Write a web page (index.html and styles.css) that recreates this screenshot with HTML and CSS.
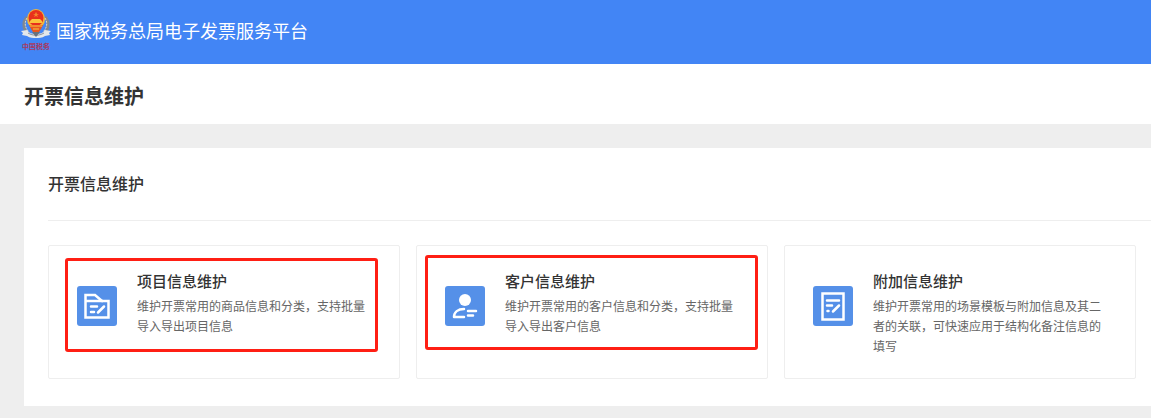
FILE: index.html
```html
<!DOCTYPE html>
<html lang="zh-CN">
<head>
    <meta charset="UTF-8">
    <meta name="viewport" content="width=device-width, initial-scale=1.0">
    <title>开票信息维护</title>
    <link rel="stylesheet" href="styles.css">
</head>
<body>

    <!-- 顶部栏 -->
    <header class="top-bar">
        <svg class="logo" viewBox="0 0 32 44" aria-hidden="true">
            <path d="M7 9C2 14 3 22 10 28M25 9c5 5 4 13-3 19" fill="none" stroke="#7f8791" stroke-width="3"/>
            <path d="M7 10c-3 5-2 10 2 14M25 10c3 5 2 10-2 14" fill="none" stroke="#e0dac6" stroke-width="1" stroke-dasharray="2 1"/>
            <ellipse cx="16" cy="11" rx="9" ry="10" fill="#f2b63c"/>
            <ellipse cx="16" cy="10" rx="7.500" ry="8" fill="#e8301c"/>
            <path d="M16 4l1 2h2l-2 1 1 2-2-1-2 1 1-2-2-1h2z" fill="#f5862c"/>
            <path d="M10 13l2-2h8l2 2v2H10z" fill="#fbc33b"/>
            <path d="M9 17h14l-2 4-2 3h-6l-2-3z" fill="#e9571e"/>
            <path d="M10 18h12M13 21h6" stroke="#f9c440" stroke-width="1"/>
            <path d="M1 23l6-1c2 3 5 4 9 4s7-1 9-4l6 1-2 2 1 2-5 1c-3 2-6 2-9 2s-6 0-9-2l-5-1 1-2z" fill="#e3e7eb"/>
            <path d="M8 25c5 3 11 3 16 0" fill="none" stroke="#8b94a0" stroke-width="1"/>
            <path d="M12 24h8l-4 5z" fill="#68717d"/>
            <text class="logo-text" x="2" y="41">中国税务</text>
        </svg>
        <span class="platform-name">国家税务总局电子发票服务平台</span>
    </header>

    <!-- 页面标题 -->
    <div class="page-title">
        <h1>开票信息维护</h1>
    </div>

    <main class="panel">
        <h2 class="panel-title">开票信息维护</h2>

        <div class="card-list">
            <!-- 项目信息 -->
            <a class="card" href="#project">
                <svg class="card-icon" viewBox="0 0 40 40" aria-hidden="true">
                    <rect width="40" height="40" rx="3" fill="#5590e8"/>
                    <path d="M8.500 31.500V9H18l7 6h6.500v16.500z" fill="none" stroke="#fff" stroke-width="2.500"/>
                    <path d="M8 15h18" stroke="#fff" stroke-width="2.500"/>
                    <path d="M14 20.500h6M14 26h3M21 26.500l6-6" fill="none" stroke="#fff" stroke-width="2.500" stroke-linecap="round"/>
                </svg>
                <div class="card-text">
                    <h3>项目信息维护</h3>
                    <p>维护开票常用的商品信息和分类，支持批量导入导出项目信息</p>
                </div>
                <span class="mark mark-project"></span>
            </a>

            <!-- 客户信息 -->
            <a class="card" href="#customer">
                <svg class="card-icon" viewBox="0 0 40 40" aria-hidden="true">
                    <rect width="40" height="40" rx="3" fill="#5590e8"/>
                    <circle cx="20" cy="14" r="6" fill="#fff"/>
                    <path d="M19 23c-6 0-10 3-10 8h10" fill="none" stroke="#fff" stroke-width="2.500" stroke-linecap="round" stroke-linejoin="round"/>
                    <path d="M23 25h8M23 29.500h5" stroke="#fff" stroke-width="2.500" stroke-linecap="round"/>
                </svg>
                <div class="card-text">
                    <h3>客户信息维护</h3>
                    <p>维护开票常用的客户信息和分类，支持批量导入导出客户信息</p>
                </div>
                <span class="mark mark-customer"></span>
            </a>

            <!-- 附加信息 -->
            <a class="card" href="#extra">
                <svg class="card-icon" viewBox="0 0 40 40" aria-hidden="true">
                    <rect width="40" height="40" rx="3" fill="#5590e8"/>
                    <rect x="9.500" y="7.500" width="21" height="26" fill="none" stroke="#fff" stroke-width="2.500"/>
                    <path d="M14 14.500h12M14 19.500h5M14.500 25h1M20 25.500l6-6" fill="none" stroke="#fff" stroke-width="2.500" stroke-linecap="round"/>
                </svg>
                <div class="card-text">
                    <h3>附加信息维护</h3>
                    <p>维护开票常用的场景模板与附加信息及其二者的关联，可快速应用于结构化备注信息的填写</p>
                </div>
            </a>
        </div>
    </main>

</body>
</html>
```

FILE: styles.css
```css
body {
    margin: 0;
    background-color: #eee;
    color: #333;
    font-family: "Noto Sans CJK SC", sans-serif;
}

h1, h2, h3, p {
    margin: 0;
}

.top-bar {
    display: flex;
    align-items: center;
    gap: 4px;
    height: 64px;
    padding: 0 20px 4px;
    box-sizing: border-box;
    background-color: #4285f5;
}

.logo {
    width: 32px;
    height: 44px;
}

.logo-text {
    font-family: "Noto Sans CJK SC", sans-serif;
    font-size: 7px;
    font-weight: bold;
    fill: #a83a62;
}

.platform-name {
    color: #fff;
    font-size: 18px;
    line-height: 24px;
}

.page-title {
    padding: 18px 24px 14px;
    background-color: #fff;
}

.page-title h1 {
    font-size: 20px;
    line-height: 28px;
}

/* 白色内容区 */
.panel {
    margin: 24px 0 12px 24px;
    padding-left: 24px;
    background-color: #fff;
}

.panel-title {
    padding: 23px 0 25px;
    border-bottom: 1px solid #eee;
    font-size: 16px;
    font-weight: 500;
    line-height: 24px;
}

.card-list {
    display: grid;
    grid-template-columns: repeat(3, 1fr);
    gap: 16px;
    padding: 24px 15px 27px 0;
}

.card {
    position: relative;
    display: flex;
    align-items: flex-start;
    gap: 20px;
    padding: 24px 28px 22px;
    border: 1px solid #eee;
    border-radius: 2px;
    color: #333;
    text-decoration: none;
}

.card:hover {
    border-color: #5590e8;
}

.card-icon {
    flex: none;
    width: 40px;
    height: 40px;
    margin-top: 16px;
}

.card-text h3 {
    margin-bottom: 4px;
    font-size: 15px;
    font-weight: 500;
    line-height: 22px;
}

.card-text p {
    color: #666;
    font-size: 12px;
    line-height: 20px;
}

/* 红色标注框 */
.mark {
    position: absolute;
    border: 3px solid #ff1f14;
    border-radius: 3px;
    pointer-events: none;
}

.mark-project {
    top: 12px;
    right: 21px;
    bottom: 26px;
    left: 16px;
}

.mark-customer {
    top: 9px;
    right: 9px;
    bottom: 28px;
    left: 8px;
}
```
